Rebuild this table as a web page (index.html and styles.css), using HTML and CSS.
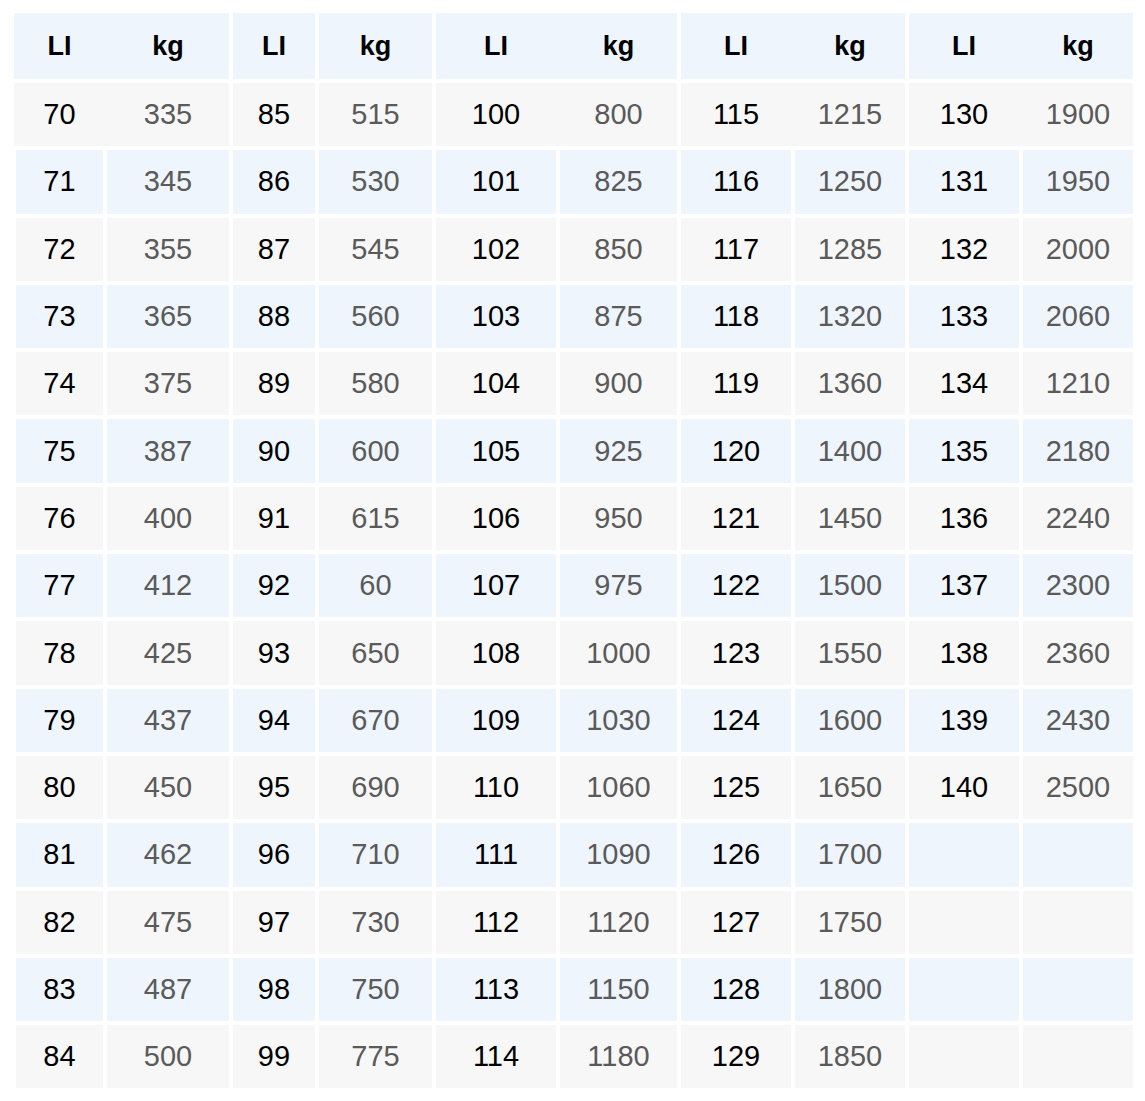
FILE: index.html
```html
<!DOCTYPE html>
<html>
<head>
<meta charset="utf-8">
<link rel="stylesheet" href="styles.css">
</head>
<body>
<table class="load-table">
  <colgroup>
    <col class="c1"><col class="c2"><col class="c3"><col class="c4"><col class="c5">
    <col class="c6"><col class="c7"><col class="c8"><col class="c9"><col class="c10">
  </colgroup>
  <thead>
    <tr class="joined">
      <th class="first join">LI</th><th>kg</th><th>LI</th><th>kg</th><th class="join">LI</th><th>kg</th><th class="join">LI</th><th>kg</th><th class="join">LI</th><th>kg</th>
    </tr>
  </thead>
  <tbody>
    <tr class="joined"><td class="li first join">70</td><td class="kg">335</td><td class="li">85</td><td class="kg">515</td><td class="li join">100</td><td class="kg">800</td><td class="li join">115</td><td class="kg">1215</td><td class="li join">130</td><td class="kg">1900</td></tr>
    <tr><td class="li">71</td><td class="kg">345</td><td class="li">86</td><td class="kg">530</td><td class="li">101</td><td class="kg">825</td><td class="li">116</td><td class="kg">1250</td><td class="li">131</td><td class="kg">1950</td></tr>
    <tr><td class="li">72</td><td class="kg">355</td><td class="li">87</td><td class="kg">545</td><td class="li">102</td><td class="kg">850</td><td class="li">117</td><td class="kg">1285</td><td class="li">132</td><td class="kg">2000</td></tr>
    <tr><td class="li">73</td><td class="kg">365</td><td class="li">88</td><td class="kg">560</td><td class="li">103</td><td class="kg">875</td><td class="li">118</td><td class="kg">1320</td><td class="li">133</td><td class="kg">2060</td></tr>
    <tr><td class="li">74</td><td class="kg">375</td><td class="li">89</td><td class="kg">580</td><td class="li">104</td><td class="kg">900</td><td class="li">119</td><td class="kg">1360</td><td class="li">134</td><td class="kg">1210</td></tr>
    <tr><td class="li">75</td><td class="kg">387</td><td class="li">90</td><td class="kg">600</td><td class="li">105</td><td class="kg">925</td><td class="li">120</td><td class="kg">1400</td><td class="li">135</td><td class="kg">2180</td></tr>
    <tr><td class="li">76</td><td class="kg">400</td><td class="li">91</td><td class="kg">615</td><td class="li">106</td><td class="kg">950</td><td class="li">121</td><td class="kg">1450</td><td class="li">136</td><td class="kg">2240</td></tr>
    <tr><td class="li">77</td><td class="kg">412</td><td class="li">92</td><td class="kg">60</td><td class="li">107</td><td class="kg">975</td><td class="li">122</td><td class="kg">1500</td><td class="li">137</td><td class="kg">2300</td></tr>
    <tr><td class="li">78</td><td class="kg">425</td><td class="li">93</td><td class="kg">650</td><td class="li">108</td><td class="kg">1000</td><td class="li">123</td><td class="kg">1550</td><td class="li">138</td><td class="kg">2360</td></tr>
    <tr><td class="li">79</td><td class="kg">437</td><td class="li">94</td><td class="kg">670</td><td class="li">109</td><td class="kg">1030</td><td class="li">124</td><td class="kg">1600</td><td class="li">139</td><td class="kg">2430</td></tr>
    <tr><td class="li">80</td><td class="kg">450</td><td class="li">95</td><td class="kg">690</td><td class="li">110</td><td class="kg">1060</td><td class="li">125</td><td class="kg">1650</td><td class="li">140</td><td class="kg">2500</td></tr>
    <tr><td class="li">81</td><td class="kg">462</td><td class="li">96</td><td class="kg">710</td><td class="li">111</td><td class="kg">1090</td><td class="li">126</td><td class="kg">1700</td><td class="li"></td><td class="kg"></td></tr>
    <tr><td class="li">82</td><td class="kg">475</td><td class="li">97</td><td class="kg">730</td><td class="li">112</td><td class="kg">1120</td><td class="li">127</td><td class="kg">1750</td><td class="li"></td><td class="kg"></td></tr>
    <tr><td class="li">83</td><td class="kg">487</td><td class="li">98</td><td class="kg">750</td><td class="li">113</td><td class="kg">1150</td><td class="li">128</td><td class="kg">1800</td><td class="li"></td><td class="kg"></td></tr>
    <tr><td class="li">84</td><td class="kg">500</td><td class="li">99</td><td class="kg">775</td><td class="li">114</td><td class="kg">1180</td><td class="li">129</td><td class="kg">1850</td><td class="li"></td><td class="kg"></td></tr>
  </tbody>
</table>
</body>
</html>
```

FILE: styles.css
```css
html, body {
  margin: 0;
  padding: 0;
  background: #ffffff;
}

body {
  font-family: "Liberation Sans", Arial, sans-serif;
}

.load-table {
  margin: 9px 0 0 12px;
  border-collapse: separate;
  border-spacing: 4px;
  table-layout: fixed;
  width: 1125px;
}

.c1 { width: 87px; }
.c2 { width: 122px; }
.c3 { width: 82px; }
.c4 { width: 113px; }
.c5 { width: 120px; }
.c6 { width: 117px; }
.c7 { width: 110px; }
.c8 { width: 110px; }
.c9 { width: 110px; }
.c10 { width: 110px; }

.load-table th,
.load-table td {
  padding: 0;
  text-align: center;
  vertical-align: middle;
}

.load-table th {
  height: 66px;
  background: #eef5fc;
  color: #000;
  font-weight: bold;
  font-size: 27px;
}

.load-table td {
  height: 63.3px;
  font-size: 29px;
  background: #f7f7f7;
}

.load-table tbody tr:nth-child(even) td {
  background: #eef5fc;
}

/* header and first body row: LI/kg pairs share one continuous panel */
.load-table thead .join {
  box-shadow: 4px 0 0 #eef5fc;
}

.load-table thead .first {
  box-shadow: 4px 0 0 #eef5fc, -2px 0 0 #eef5fc;
}

.load-table tbody .joined .join {
  box-shadow: 4px 0 0 #f7f7f7;
}

.load-table tbody .joined .first {
  box-shadow: 4px 0 0 #f7f7f7, -2px 0 0 #f7f7f7;
}

.load-table td.li {
  color: #000;
}

.load-table td.kg {
  color: #5a5a5a;
}
```
